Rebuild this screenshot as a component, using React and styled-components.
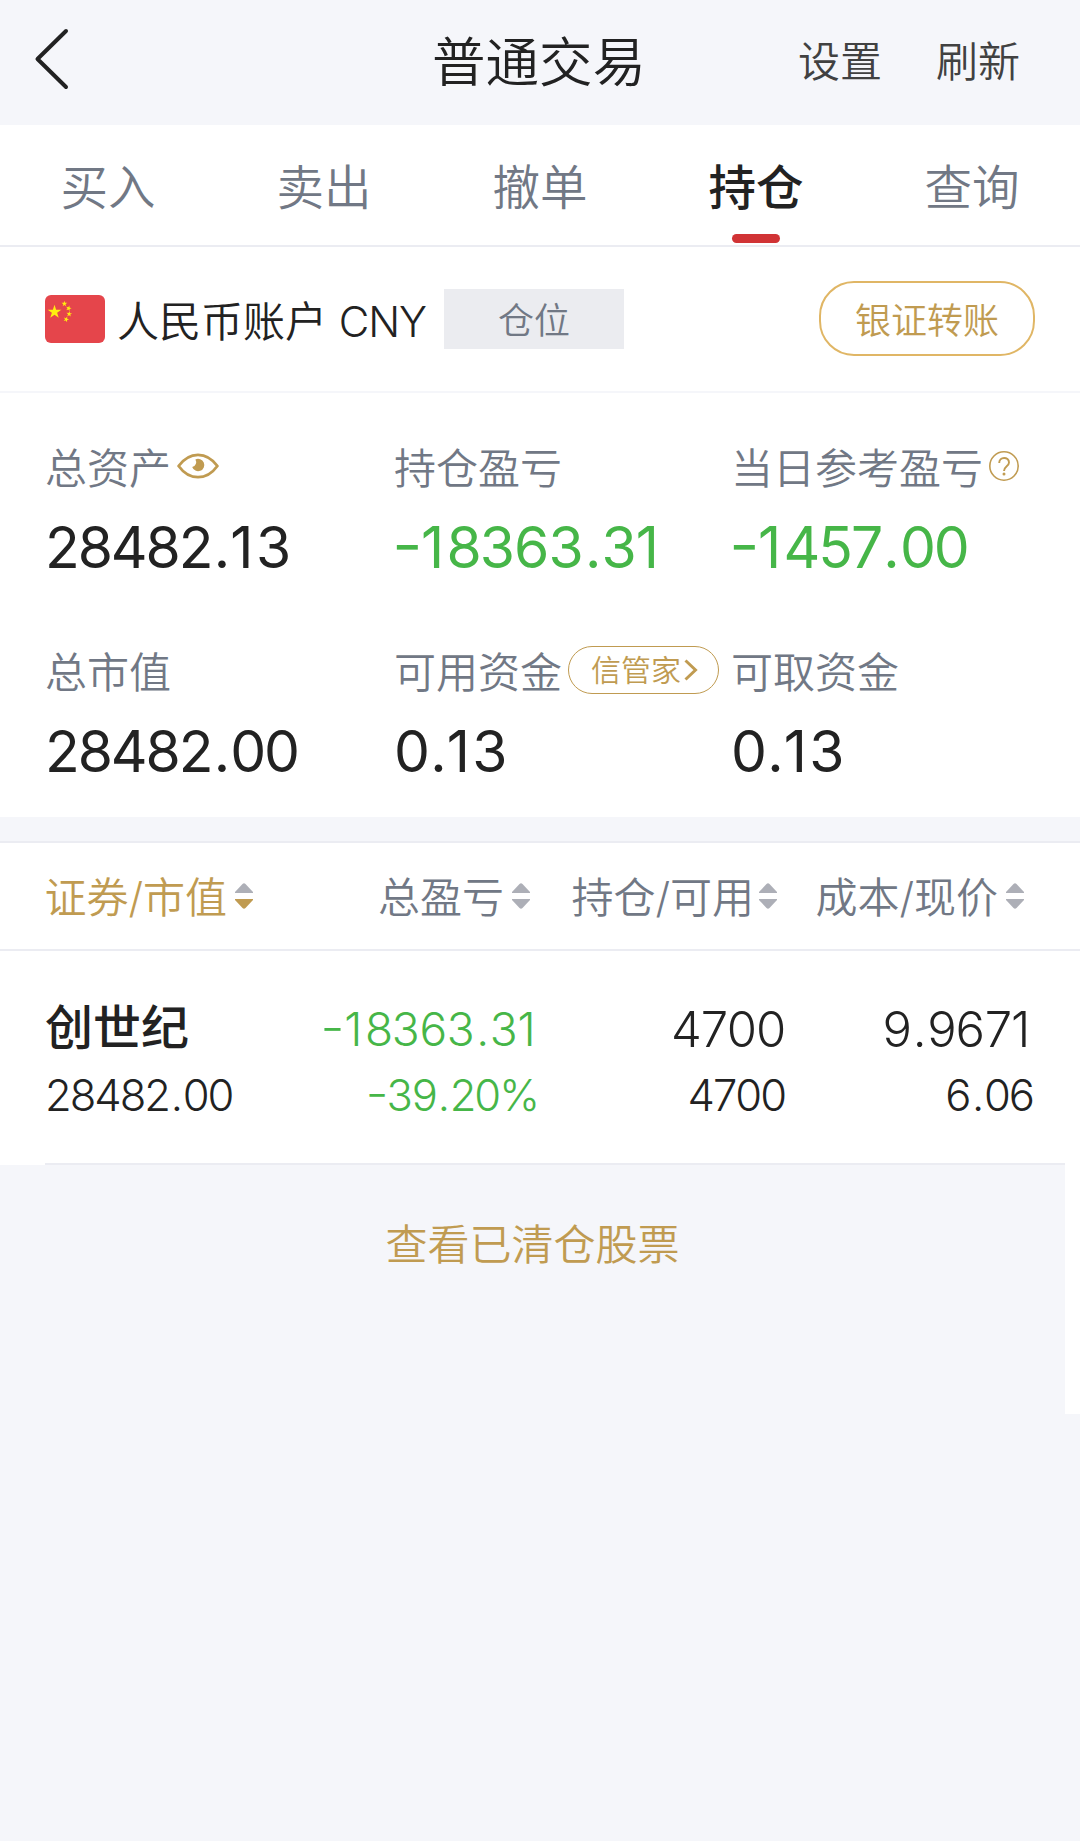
import React from "react";
import styled, { createGlobalStyle } from "styled-components";

const stats = [
  { label: "总资产", value: "28482.13", icon: "eye" },
  { label: "持仓盈亏", value: "-18363.31", down: true },
  { label: "当日参考盈亏", value: "-1457.00", icon: "help", down: true },
  { label: "总市值", value: "28482.00" },
  { label: "可用资金", value: "0.13", icon: "manager" },
  { label: "可取资金", value: "0.13" },
];

const columns = [
  { label: "证券/市值", active: true },
  { label: "总盈亏" },
  { label: "持仓/可用", gap: 5 },
  { label: "成本/现价" },
];

const tabs = ["买入", "卖出", "撤单", "持仓", "查询"];

const STAR = "0,-1 .225,-.309 .951,-.309 .363,.118 .588,.809 0,.382 -.588,.809 -.363,.118 -.951,-.309 -.225,-.309";

const Flag = () => (
  <svg width="60" height="48" viewBox="0 0 60 48">
    <rect width="60" height="48" rx="6" fill="#e5454b" />
    <g fill="#ffee0f">
      <polygon points={STAR} transform="translate(9.5 16.9) scale(7.2)" />
      <polygon points={STAR} transform="translate(19.4 8.8) scale(3)" />
      <polygon points={STAR} transform="translate(23.6 13.3) rotate(15) scale(3)" />
      <polygon points={STAR} transform="translate(24.2 19) rotate(5) scale(3)" />
      <polygon points={STAR} transform="translate(21.2 24.4) rotate(20) scale(3)" />
    </g>
  </svg>
);

const Eye = () => (
  <svg width="42" height="26" viewBox="0 0 42 26">
    <path
      d="M1.6 13C7 5.500 13.500 1.800 21 1.800S35 5.500 40.400 13C35 20.500 28.500 24.200 21 24.200S7 20.500 1.600 13Z"
      fill="none"
      stroke="#c09b51"
      strokeWidth="2.8"
      strokeLinejoin="round"
    />
    <path d="M18.400 6.400A6.200 6.200 0 1 1 15.200 14A5 5 0 0 0 18.400 6.400Z" fill="#c09b51" />
  </svg>
);

const Help = () => (
  <svg width="30" height="30" viewBox="0 0 30 30" fill="none" stroke="#c09b51">
    <circle cx="15" cy="15" r="14.200" strokeWidth="1.600" />
    <path d="M10.200 12C10.200 5.300 20 5.500 20 11.500C20 15.200 15 15.500 15 20" strokeWidth="1.900" />
    <circle cx="15" cy="22.900" r="1.500" fill="#c09b51" stroke="none" />
  </svg>
);

const SortArrows = ({ active }) => (
  <svg width="18" height="26" viewBox="0 0 18 26">
    <path d="M0 10V9L7.500 1Q9 -.5 10.500 1L18 9V10Z" fill="#adafb7" />
    <path d="M0 16V17L7.500 25Q9 26.500 10.500 25L18 17V16Z" fill={active ? "#c09b51" : "#adafb7"} />
  </svg>
);

const Amount = ({ value }) =>
  value.split(/([-.136])/).map((part, index) => {
    if (part === "-") return <Minus key={index}>-</Minus>;
    if (part === ".") return <Point key={index}>.</Point>;
    if (part === "1") return <One key={index}>1</One>;
    if (part === "3" || part === "6") return <Round key={index}>{part}</Round>;
    return part;
  });

const App = () => {
  return (
    <Page>
      <GlobalStyle />
      <Header>
        <Back>
          <svg width="36" height="64" viewBox="0 0 36 64" fill="none">
            <path
              d="M33 4L4.500 32L33 60"
              stroke="#222"
              strokeWidth="4"
              strokeLinecap="round"
              strokeLinejoin="round"
            />
          </svg>
        </Back>
        <Title>普通交易</Title>
        <Actions>
          <span>设置</span>
          <span>刷新</span>
        </Actions>
      </Header>

      <Tabs>
        {tabs.map((tab) => (
          <Tab key={tab} $active={tab === "持仓"}>
            {tab}
          </Tab>
        ))}
      </Tabs>

      <Account>
        <Flag />
        <AccountName>
          人民币账户 <span>CNY</span>
        </AccountName>
        <Tag>仓位</Tag>
        <Transfer>银证转账</Transfer>
      </Account>

      <Stats>
        {stats.map((item) => (
          <div key={item.label}>
            <StatLabel>
              <span>{item.label}</span>
              {item.icon === "eye" && <Eye />}
              {item.icon === "help" && <Help />}
              {item.icon === "manager" && (
                <Manager>
                  信管家
                  <svg width="14" height="22" viewBox="0 0 14 22" fill="none">
                    <path d="M1.500 1.500L11.500 11L1.500 20.500" stroke="#c09b51" strokeWidth="3" />
                  </svg>
                </Manager>
              )}
            </StatLabel>
            <StatValue $down={item.down}>
              <Amount value={item.value} />
            </StatValue>
          </div>
        ))}
      </Stats>

      <TableHead>
        {columns.map((col) => (
          <HeadCell key={col.label} $active={col.active} $gap={col.gap}>
            <span>{col.label}</span>
            <SortArrows active={col.active} />
          </HeadCell>
        ))}
      </TableHead>

      <Holding>
        <HoldingCell>
          <StockName>创世纪</StockName>
          <Sub>
            <Amount value="28482.00" />
          </Sub>
        </HoldingCell>
        <HoldingCell $down>
          <Main $small>
            <Amount value="-18363.31" />
          </Main>
          <Sub>
            <Amount value="-39.20%" />
          </Sub>
        </HoldingCell>
        <HoldingCell>
          <Main>
            <Amount value="4700" />
          </Main>
          <Sub>
            <Amount value="4700" />
          </Sub>
        </HoldingCell>
        <HoldingCell>
          <Main>
            <Amount value="9.9671" />
          </Main>
          <Sub>
            <Amount value="6.06" />
          </Sub>
        </HoldingCell>
      </Holding>

      <Footer>
        <Cleared>查看已清仓股票</Cleared>
      </Footer>
    </Page>
  );
};

const GlobalStyle = createGlobalStyle`
  * {
    box-sizing: border-box;
  }
  body {
    margin: 0;
    background: #f5f6fa;
    font-family: Inter, "Noto Sans CJK SC", sans-serif;
    font-kerning: none;
    font-feature-settings: "case" 1;
  }
  svg {
    display: block;
    flex-shrink: 0;
  }
`;

const Minus = styled.span`
  display: inline-block;
  margin-right: 0.05em;
  transform: scaleX(1.15);
`;

const Point = styled.span`
  margin: 0 0.04em;
`;

const One = styled.span`
  margin-right: 0.08em;
`;

const Round = styled.span`
  margin-right: 0.02em;

  &:last-child {
    margin-right: 0;
  }
`;

const Page = styled.div`
  width: 1080px;
  min-height: 1841px;
  color: #222;
  background: #f5f6fa;
`;

const Header = styled.header`
  display: grid;
  grid-template-columns: 432px 1fr 282px;
  align-items: center;
  height: 125px;
`;

const Back = styled.div`
  padding: 0 0 7px 33px;
`;

const Title = styled.h1`
  margin: 0;
  font-size: 53.5px;
  font-weight: 350;
  line-height: 80px;
  white-space: nowrap;
  padding-top: 1px;
`;

const Actions = styled.div`
  display: flex;
  gap: 54px;
  padding-bottom: 1px;
  color: #414141;
  font-size: 42px;
  font-weight: 350;
  line-height: 60px;
`;

const Tabs = styled.nav`
  display: grid;
  grid-template-columns: repeat(5, 1fr);
  height: 122px;
  background: #fff;
  border-bottom: 2px solid #ebecf2;
`;

const Tab = styled.div`
  display: flex;
  flex-direction: column;
  align-items: center;
  padding-top: 28px;
  font-size: 47.5px;
  line-height: 70px;
  color: ${({ $active }) => ($active ? "#222" : "#717885")};
  font-weight: ${({ $active }) => ($active ? 500 : 350)};

  &::after {
    content: "";
    width: 48px;
    height: 9px;
    margin-top: 11px;
    border-radius: 5px;
    background: ${({ $active }) => ($active ? "#d13335" : "transparent")};
  }
`;

const Account = styled.section`
  display: flex;
  align-items: center;
  height: 146px;
  padding: 0 45px;
  background: #fff;
  border-bottom: 2px solid #f5f6fa;
`;

const AccountName = styled.div`
  width: 339px;
  padding: 5px 0 0 12px;
  font-size: 42px;
  font-weight: 350;
  line-height: 60px;
  white-space: nowrap;

  span {
    font-weight: 300;
    letter-spacing: -1.2px;
  }
`;

const Tag = styled.div`
  width: 180px;
  height: 60px;
  padding-top: 2px;
  background: #ebecf0;
  color: #717885;
  font-size: 36px;
  font-weight: 350;
  line-height: 60px;
  text-align: center;
`;

const Transfer = styled.button`
  width: 216px;
  height: 75px;
  margin: 0 0 2px auto;
  padding: 0;
  border: 2px solid #e0b665;
  border-radius: 35px;
  background: #fff;
  color: #c09b51;
  font-family: inherit;
  font-size: 36px;
  font-weight: 350;
`;

const Stats = styled.section`
  display: grid;
  grid-template-columns: 349px 337px 1fr;
  grid-auto-rows: 204px;
  height: 424px;
  padding: 43px 0 0 45px;
  background: #fff;
`;

const StatLabel = styled.div`
  display: flex;
  align-items: center;
  gap: 6px;
  height: 60px;
  color: #717885;
  font-size: 42px;
  line-height: 60px;
  font-weight: 350;
  white-space: nowrap;

  > span:first-child {
    padding-top: 6px;
  }
`;

const StatValue = styled.div`
  height: 70px;
  margin-top: 17px;
  font-size: 57px;
  font-weight: 400;
  line-height: 70px;
  letter-spacing: -2.1px;
  white-space: nowrap;
  color: ${({ $down }) => ($down ? "#46b648" : "#222")};
`;

const Manager = styled.span`
  display: flex;
  align-items: center;
  justify-content: center;
  gap: 3px;
  width: 151px;
  height: 48px;
  padding-left: 2px;
  border: 1.5px solid #c09b51;
  border-radius: 24px;
  color: #c09b51;
  font-size: 30px;
`;

const TableHead = styled.div`
  display: grid;
  grid-template-columns: 253px 277px 247px 247px;
  height: 110px;
  margin-top: 24px;
  background: #fff;
  border-top: 2px solid #ebecf2;
  border-bottom: 2px solid #ebecf2;
`;

const HeadCell = styled.div`
  display: flex;
  align-items: center;
  justify-content: flex-end;
  gap: ${({ $gap }) => $gap || 8}px;
  color: ${({ $active }) => ($active ? "#c09b51" : "#717885")};
  font-size: 42px;
  font-weight: 350;
  white-space: nowrap;

  > span {
    padding-bottom: 4px;
  }
`;

const Holding = styled.div`
  display: grid;
  grid-template-columns: 200px 293px 247px 248px;
  height: 214px;
  padding: 41px 0 0 45px;
  background: linear-gradient(#ebecf2, #ebecf2) 45px 100% / 1020px 2px no-repeat #fff;
`;

const HoldingCell = styled.div`
  text-align: right;
  white-space: nowrap;
  color: ${({ $down }) => ($down ? "#46b648" : "#222")};

  &:first-child {
    text-align: left;
  }
`;

const StockName = styled.div`
  height: 73px;
  font-size: 48px;
  font-weight: 500;
  line-height: 71px;
`;

const Main = styled.div`
  height: 73px;
  font-size: ${({ $small }) => ($small ? "46px" : "49px")};
  font-weight: 300;
  line-height: 75px;
  letter-spacing: -1.2px;
`;

const Sub = styled.div`
  font-size: 43.5px;
  font-weight: 300;
  line-height: 60px;
  letter-spacing: -2px;
`;

const Footer = styled.div`
  height: 249px;
  padding-top: 50px;
  border-right: 15px solid #fff;
  text-align: center;
`;

const Cleared = styled.span`
  color: #c09b51;
  font-size: 42px;
  font-weight: 350;
  line-height: 60px;
`;

export default App;
